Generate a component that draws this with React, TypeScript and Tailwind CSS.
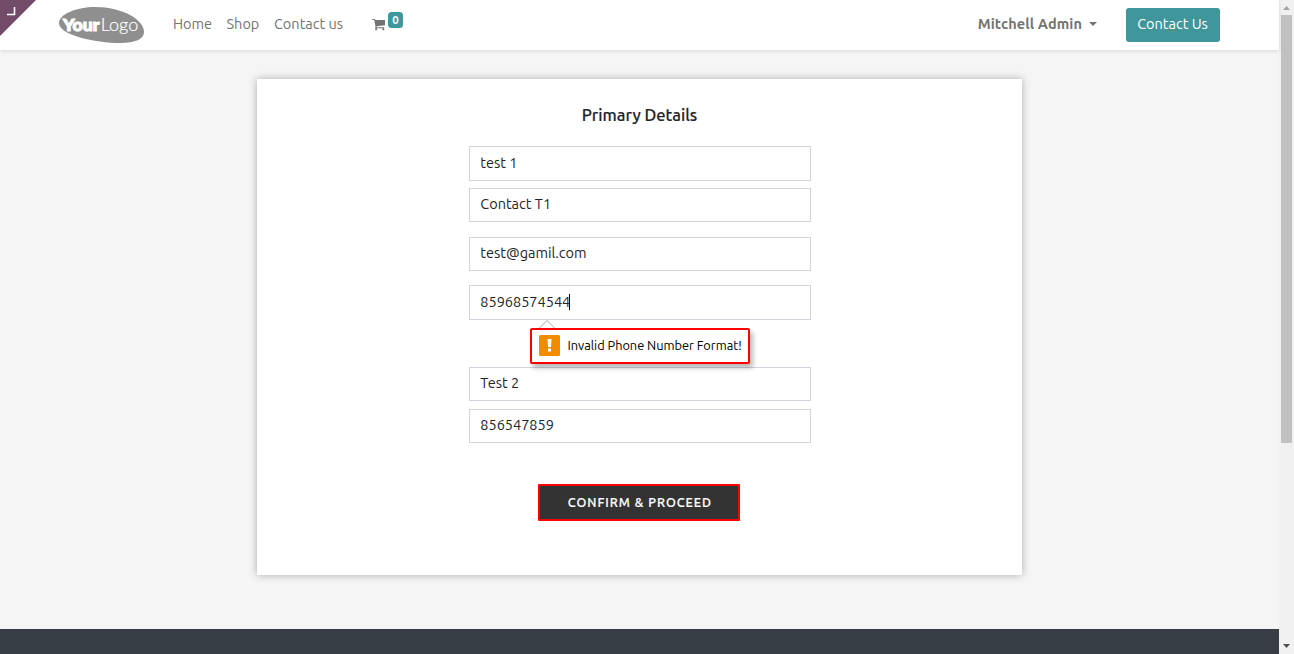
import React from 'react';

type FieldProps = { value: string; box: string; focused?: boolean };

function Field({ value, box, focused }: FieldProps) {
  return (
    <div className={`flex w-[342px] shrink-0 items-center border border-[#ced4da] bg-white px-[10.8px] text-[14.5px] leading-[22px] text-[#212529] ${box}`}>
      <span className="whitespace-nowrap">{value}</span>
      {focused && <span className="-ml-px h-4 w-px bg-black" />}
    </div>
  );
}

function Logo() {
  return (
    <svg className="block h-[40px] w-[88px]" viewBox="0 0 88 40" role="img" aria-label="Your Logo">
      <path d="M2 18C2 9 20 2 38 2c28 0 49 13 49 25 0 7-9 11-23 11C37 38 2 30 2 18Z" fill="#8f8f8f" />
      <text x="6" y="25.500" textLength="36.500" lengthAdjust="spacingAndGlyphs" fontFamily="Lato, sans-serif" fontWeight="900" fontSize="17.500" fill="#fff" stroke="#fff" strokeWidth="1.100">Your</text>
      <text x="43.800" y="25.500" textLength="37.500" lengthAdjust="spacingAndGlyphs" fontFamily="Lato, sans-serif" fontWeight="300" fontSize="18.500" fill="#fff" stroke="#fff" strokeWidth="0.200">Logo</text>
    </svg>
  );
}

function CartIcon() {
  return (
    <svg className="h-[14.4px] w-[13.4px]" viewBox="0 0 1664 1792" fill="currentColor" aria-hidden="true">
      <path d="M640 1536q0 52-38 90t-90 38-90-38-38-90 38-90 90-38 90 38 38 90zm896 0q0 52-38 90t-90 38-90-38-38-90 38-90 90-38 90 38 38 90zm128-1088v512q0 24-16.500 42.500t-40.500 21.500l-1044 122q13 60 13 70 0 16-24 64h920q26 0 45 19t19 45-19 45-45 19h-1024q-26 0-45-19t-19-45q0-11 8-31.500t16-36 21.500-40 15.500-29.500l-177-823h-204q-26 0-45-19t-19-45 19-45 45-19h256q16 0 28.500 6.500t19.500 15.500 13 24.500 8 26 5.500 29.500 4.500 26h1201q26 0 45 19t19 45z" />
    </svg>
  );
}

function ErrorTip() {
  return (
    <div className="absolute left-[61px] top-[43px] flex h-[36px] w-[220px] items-center rounded-[2px] border-2 border-[#ff0000] bg-white pl-[7px] shadow-[3px_4px_5px_rgba(0,0,0,0.28)]">
      <svg className="absolute left-[6px] top-[-11px] h-[10px] w-[18px]" viewBox="0 0 18 10">
        <path d="M1.500 9 9 1.500 16.500 9" fill="#fff" stroke="#a5a5aa" />
      </svg>
      <svg className="mt-[-1px] h-[21px] w-[21px] shrink-0" viewBox="0 0 21 21">
        <rect width="21" height="21" rx="1.500" fill="#f38b00" />
        <path d="M8.500 4h4l-.5 8H9zM9 13.500h3v3H9z" fill="#fff" />
      </svg>
      <span className="ml-[8px] whitespace-nowrap pb-[2px] text-[12.8px] leading-[20px] tracking-[-0.03px] text-black">Invalid Phone Number Format!</span>
    </div>
  );
}

export default function App() {
  return (
    <div className="flex h-[654px] w-[1294px] overflow-hidden bg-[#f5f5f5] font-['Ubuntu','Noto_Sans',sans-serif]">
      <div className="relative flex w-[1279px] flex-col">
        <header className="z-10 flex h-[50px] shrink-0 items-center bg-white pl-[57px] pr-[59px] text-[14.5px] leading-[22px] text-[#737373] shadow-[0_1px_4px_rgba(0,0,0,0.12)]">
          <Logo />
          <nav className="ml-[28px] flex items-center whitespace-nowrap pb-[2px]">
            <a className="w-[53.500px]">Home</a>
            <a className="w-[47.500px]">Shop</a>
            <a className="w-[98px]">Contact us</a>
            <CartIcon />
            <span className="mb-[8px] ml-[2.600px] flex h-[16px] w-[15px] items-center justify-center rounded-[3.500px] bg-[#3f969b] text-[11.500px] font-bold leading-none text-white">0</span>
          </nav>
          <div className="ml-auto flex items-center">
            <span className="whitespace-nowrap pb-[2px] font-bold tracking-[0.1px]">Mitchell Admin</span>
            <svg className="ml-[7px] mr-[29px] mt-[-2px] h-[4px] w-[8px]" viewBox="0 0 8 4"><path d="M0 0h8L4 4z" fill="#737373" /></svg>
            <button className="h-[34px] w-[94px] whitespace-nowrap rounded-[3px] bg-[#3f969b] pb-[2px] pr-[1px] text-white">Contact Us</button>
          </div>
        </header>
        <svg className="absolute left-0 top-0 z-20 h-[36px] w-[36px]" viewBox="0 0 36 36">
          <path d="M0 0h36L0 36z" fill="#714b67" />
          <path d="M7 14.500h7.500V7" fill="none" stroke="#fff" strokeWidth="1.600" />
        </svg>
        <main className="flex flex-1 justify-center pt-[29px]">
          <section className="flex h-[496px] w-[765px] flex-col items-center bg-white shadow-[0_0_8px_rgba(0,0,0,0.3)]">
            <h1 className="mt-[25px] h-[42px] whitespace-nowrap text-[16.500px] font-medium leading-[22px] text-[#212529] [-webkit-text-stroke:0.15px_#212529]">Primary Details</h1>
            <Field value="test 1" box="h-[35px] pb-[1px]" />
            <Field value="Contact T1" box="mt-[7px] h-[34px] pb-[2px]" />
            <Field value="test@gamil.com" box="mt-[15px] h-[34px] pb-[2px]" />
            <div className="relative mt-[14px]">
              <Field value="85968574544" box="h-[35px] pb-[1px]" focused />
              <ErrorTip />
            </div>
            <Field value="Test 2" box="mt-[47px] h-[34px] pb-[2px]" />
            <Field value="856547859" box="mt-[8px] h-[34px] pb-[2px]" />
            <button className="mr-[2px] mt-[41px] h-[37px] w-[202px] shrink-0 whitespace-nowrap rounded-[1px] border-2 border-[#ff0000] bg-[#333] pl-[3px] text-[12.600px] font-medium tracking-[1px] text-white [-webkit-text-stroke:0.2px_#fff]">CONFIRM &amp; PROCEED</button>
          </section>
        </main>
        <footer className="h-[25px] shrink-0 bg-[#383e45]" />
      </div>
      <aside className="flex w-[15px] flex-col items-center justify-between bg-[#f1f1f1]">
        <div className="flex flex-col items-center">
          <svg className="h-[15px] w-[15px]" viewBox="0 0 15 15"><path d="M4 10h7L7.500 6z" fill="#a3a3a3" /></svg>
          <div className="h-[428px] w-[11px] bg-[#c1c1c1]" />
        </div>
        <svg className="h-[15px] w-[15px]" viewBox="0 0 15 15"><path d="M4 5h7L7.500 9z" fill="#505050" /></svg>
      </aside>
    </div>
  );
}
